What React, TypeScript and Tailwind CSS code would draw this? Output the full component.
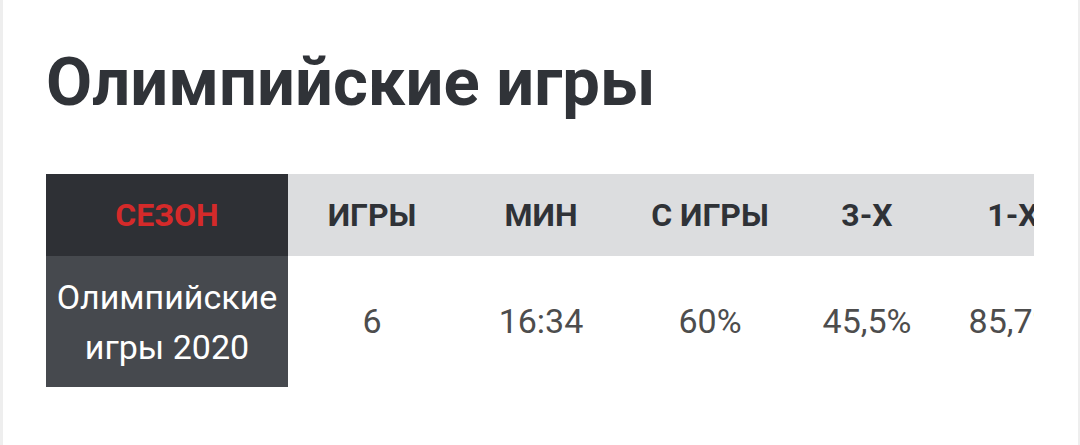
import React from 'react';

type Col = { label: string; value: string; width: string };

const cols: Col[] = [
    { label: 'ИГРЫ', value: '6', width: 'w-[168px]' },
    { label: 'МИН', value: '16:34', width: 'w-[170px]' },
    { label: 'С ИГРЫ', value: '60%', width: 'w-[168px]' },
    { label: '3-Х', value: '45,5%', width: 'w-[146px]' },
    { label: '1-Х', value: '85,7%', width: 'w-[146px]' },
];

const StatsTable: React.FC = () => (
    <div className="w-[988px] overflow-hidden">
        <div className="flex w-max">
            <div className="flex flex-col w-[242px] shrink-0">
                <div className="h-[82px] bg-[#2e3035] flex items-center justify-center">
                    <span className="text-[32px] font-bold text-[#d42a2a]">СЕЗОН</span>
                </div>
                <div className="h-[131px] bg-[#46494e] flex items-center justify-center text-center">
                    <span className="text-[34px] leading-[50px] text-white">
                        Олимпийские
                        <br />
                        игры 2020
                    </span>
                </div>
            </div>
            {cols.map(c => (
                <div key={c.label} className={`flex flex-col shrink-0 ${c.width}`}>
                    <div className="h-[82px] bg-[#dcdddf] flex items-center justify-center">
                        <span className="text-[32px] font-bold text-[#2f3237] whitespace-nowrap">{c.label}</span>
                    </div>
                    <div className="h-[131px] flex items-center justify-center">
                        <span className="text-[34px] text-[#4d4d4d] whitespace-nowrap">{c.value}</span>
                    </div>
                </div>
            ))}
        </div>
    </div>
);

export default function App() {
    return (
        <div className="w-[1080px] h-[445px] bg-white border-l-[3px] border-r-[2px] border-[#eeeeee] font-['Roboto',sans-serif] overflow-hidden">
            <div className="pl-[43px] pt-[49px]">
                <h1 className="text-[67px] leading-none font-bold text-[#303338]">Олимпийские игры</h1>
                <div className="mt-[58px]">
                    <StatsTable />
                </div>
            </div>
        </div>
    );
}
